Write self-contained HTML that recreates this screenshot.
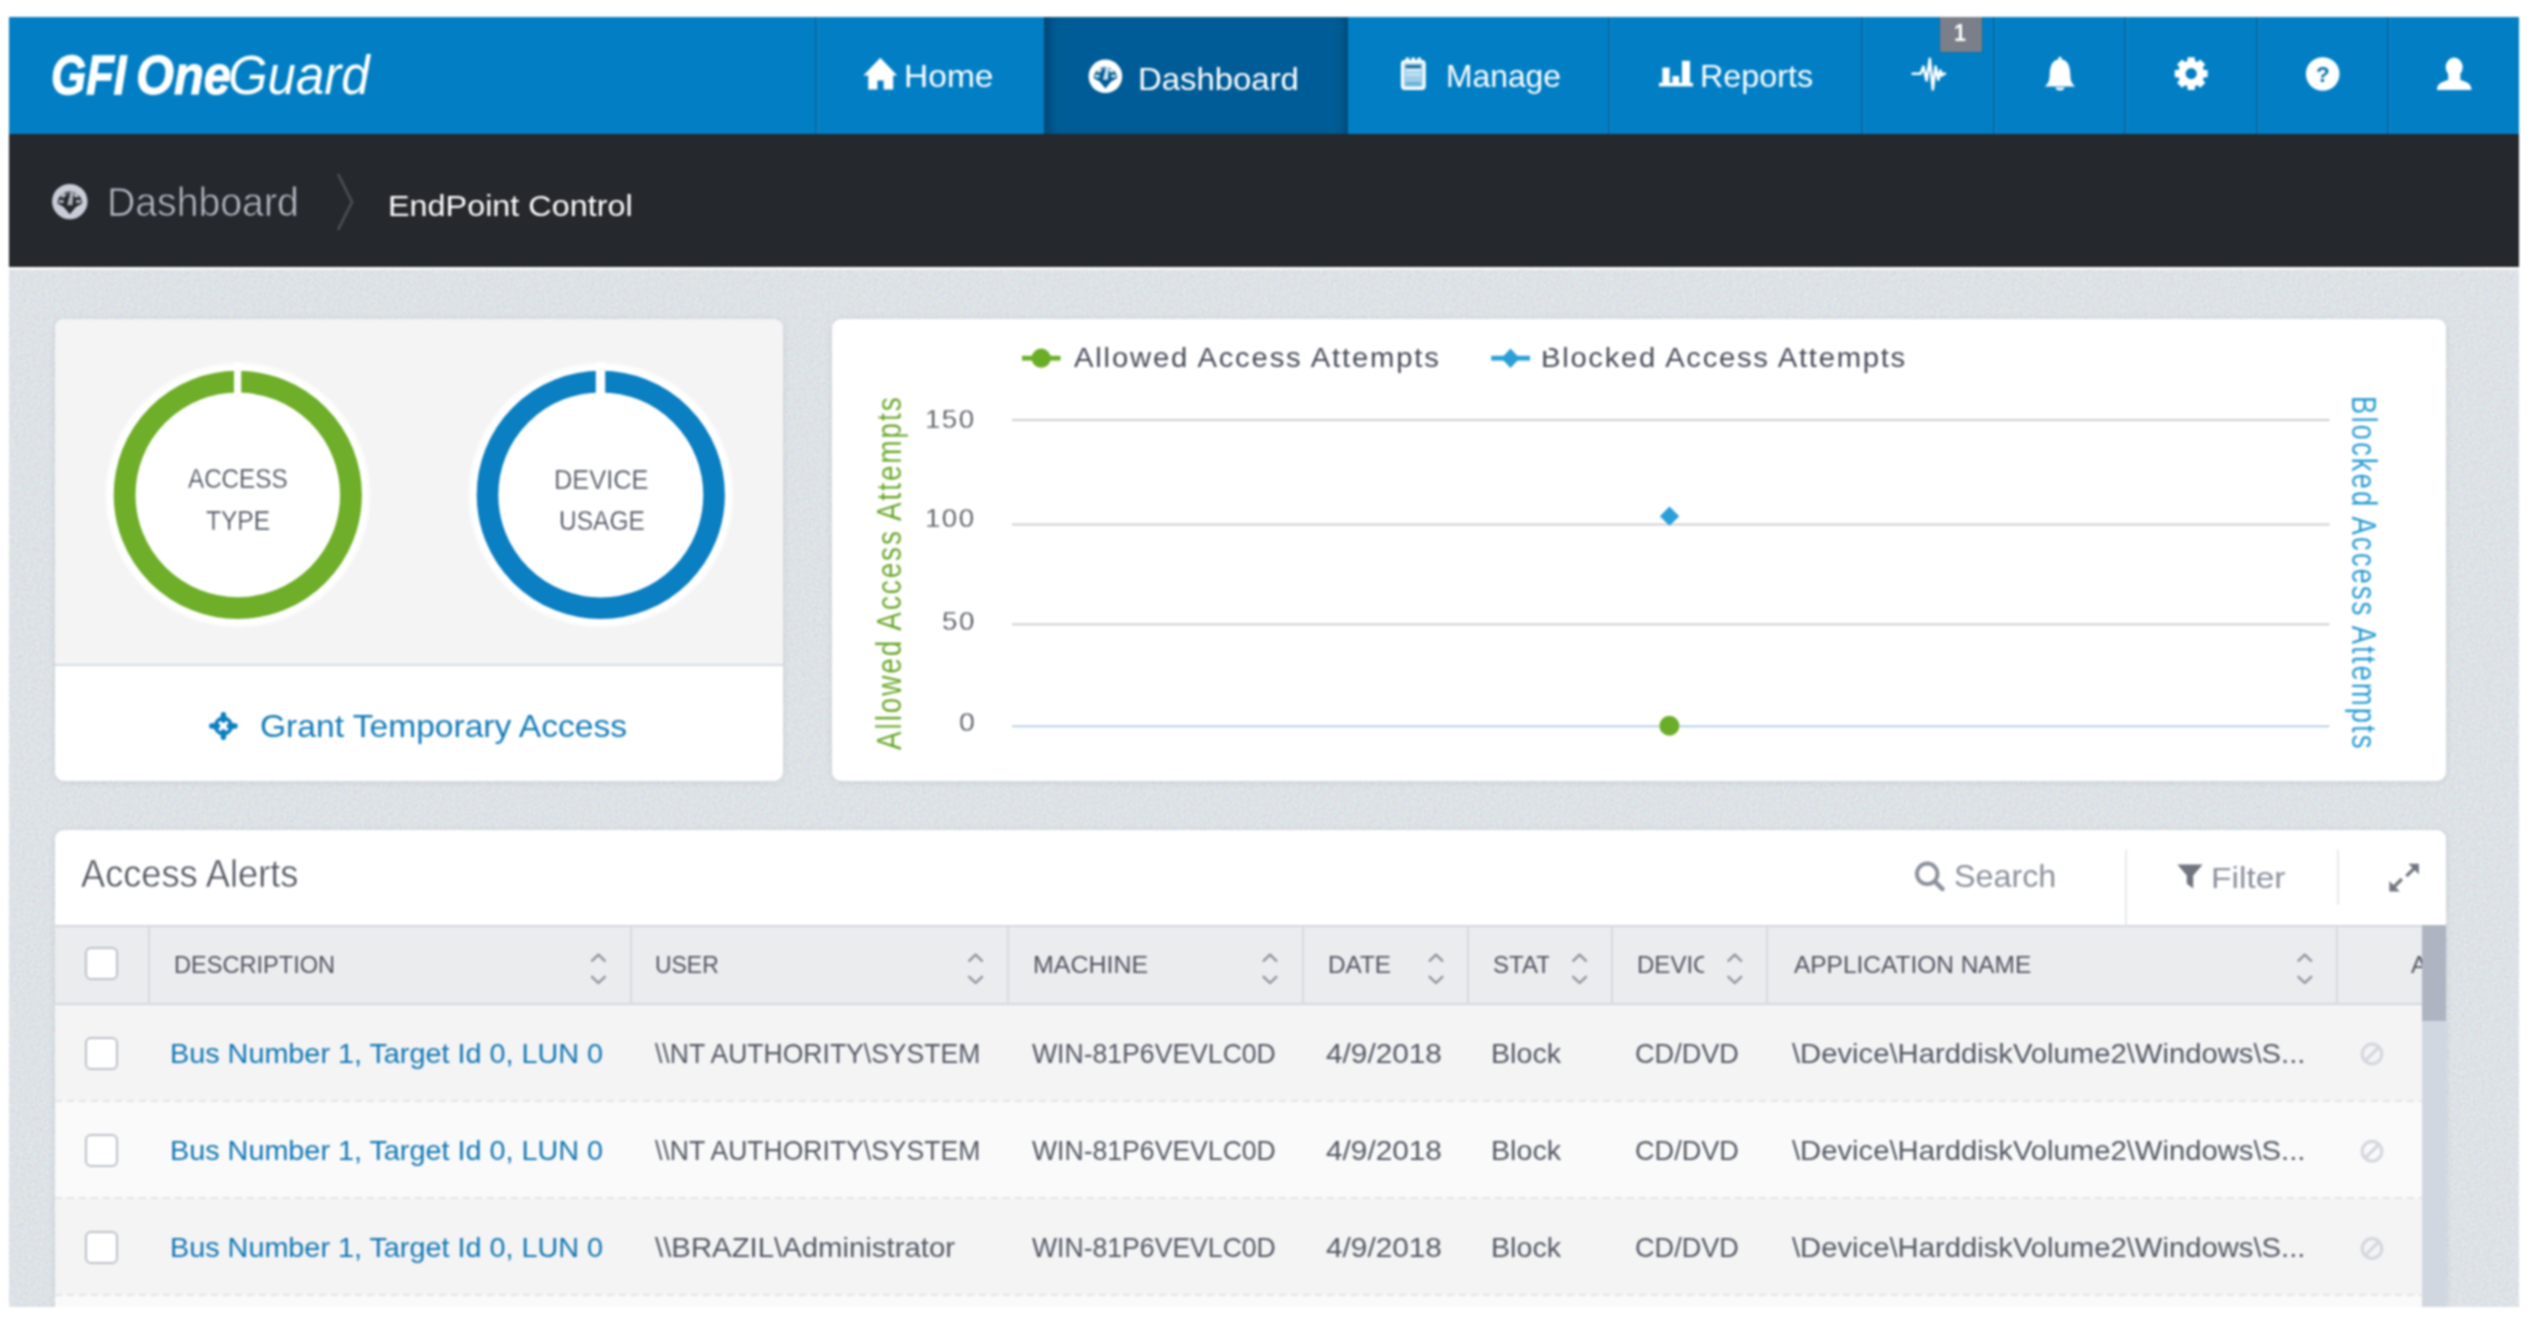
<!DOCTYPE html>
<html lang="en"><head><meta charset="utf-8"><title>GFI OneGuard - EndPoint Control</title>
<style>
html,body{margin:0;padding:0;background:#fff;}
body{width:2540px;height:1324px;position:relative;overflow:hidden;font-family:"Liberation Sans",sans-serif;}
#frame{position:absolute;left:9px;top:17px;width:2510px;height:1290px;overflow:hidden;background:#dee2e6;filter:blur(0.8px);}
#page{position:absolute;left:-9px;top:-17px;width:2540px;height:1324px;}
.a{position:absolute;}
.t{position:absolute;white-space:pre;line-height:1;transform-origin:0 0;}
.panel{position:absolute;border-radius:9px;box-shadow:0 1px 6px rgba(90,105,125,0.17);}
.sep{position:absolute;top:17px;height:117px;width:2px;background:#0569a6;border-right:1px solid #1589c9;}
.cb{position:absolute;left:85px;width:29px;height:29px;border:2px solid #bcc0c8;border-radius:6px;background:#fff;}
.cs{position:absolute;top:927px;height:77px;width:2px;background:#d6d9df;}
.row{position:absolute;left:55px;width:2367px;}
.dash{position:absolute;left:55px;width:2367px;height:2px;background:repeating-linear-gradient(90deg,#e2e4e8 0,#e2e4e8 7px,rgba(0,0,0,0) 7px,rgba(0,0,0,0) 12px);}
</style></head><body>
<div id="frame"><div id="page">

<!-- header -->
<div class="a" style="left:9px;top:17px;width:2510px;height:117px;background:#027fc4;"></div>
<div class="a" style="left:1044px;top:17px;width:304px;height:117px;background:#005c96;box-shadow:inset 12px 0 14px -10px rgba(0,0,0,.4),inset -10px 0 12px -9px rgba(0,0,0,.35);"></div>
<div class="sep" style="left:815px;"></div>
<div class="sep" style="left:1608px;"></div>
<div class="sep" style="left:1861px;"></div>
<div class="sep" style="left:1993px;"></div>
<div class="sep" style="left:2124px;"></div>
<div class="sep" style="left:2256px;"></div>
<div class="sep" style="left:2387px;"></div>
<div class="a" style="left:1940px;top:17px;width:42px;height:35px;background:#7a7f89;box-shadow:0 0 0 1px rgba(0,0,0,.12);"></div>
<!-- breadcrumb bar -->
<div class="a" style="left:9px;top:134px;width:2510px;height:133px;background:#25282c;"></div>

<svg class="a" style="left:9px;top:267px;" width="2510" height="1040"><filter id="nz" x="0" y="0" width="100%" height="100%" color-interpolation-filters="sRGB"><feTurbulence type="fractalNoise" baseFrequency="0.45" numOctaves="2" seed="7"/><feColorMatrix type="matrix" values="0.22 0 0 0 0.757  0 0.22 0 0 0.776  0 0 0.22 0 0.792  0 0 0 0 1"/></filter><rect width="2510" height="1040" filter="url(#nz)"/></svg>
<div class="a" style="left:9px;top:267px;width:2510px;height:3px;background:linear-gradient(#fff,#fff 60%,rgba(255,255,255,0));"></div>
<!-- left panel -->
<div class="panel" style="left:55px;top:319px;width:728px;height:462px;background:#fff;overflow:hidden;">
  <div class="a" style="left:0;top:0;width:728px;height:345px;background:#f4f4f5;"></div>
  <div class="a" style="left:0;top:345px;width:728px;height:2px;background:#d6dae1;"></div>
</div>
<!-- chart panel -->
<div class="panel" style="left:832px;top:319px;width:1614px;height:462px;background:#fff;"></div>
<!-- table panel -->
<div class="panel" style="left:55px;top:830px;width:2391px;height:520px;background:#fff;"></div>
<div class="a" style="left:55px;top:925px;width:2391px;height:80px;background:#ebecee;border-top:2px solid #d3d7de;border-bottom:2px solid #d3d7de;box-sizing:border-box;"></div>
<div class="row" style="top:1005px;height:96px;background:#f4f4f5;"></div>
<div class="row" style="top:1101px;height:97px;background:#fafafa;"></div>
<div class="row" style="top:1198px;height:97px;background:#f4f4f5;"></div>
<div class="row" style="top:1295px;height:30px;background:#fafafa;"></div>
<div class="dash" style="top:1100px;"></div>
<div class="dash" style="top:1197px;"></div>
<div class="dash" style="top:1294px;"></div>
<div class="cs" style="left:148px;"></div>
<div class="cs" style="left:630px;"></div>
<div class="cs" style="left:1007px;"></div>
<div class="cs" style="left:1302px;"></div>
<div class="cs" style="left:1467px;"></div>
<div class="cs" style="left:1611px;"></div>
<div class="cs" style="left:1766px;"></div>
<div class="cs" style="left:2336px;"></div>
<div class="a" style="left:2125px;top:850px;width:2px;height:76px;background:#e7e9ed;"></div>
<div class="a" style="left:2337px;top:850px;width:2px;height:55px;background:#e7e9ed;"></div>
<!-- scrollbar -->
<div class="a" style="left:2422px;top:925px;width:24px;height:400px;background:#d1d7e1;"></div>
<div class="a" style="left:2422px;top:925px;width:24px;height:96px;background:#aeb4c2;"></div>
<!-- checkboxes -->
<div class="cb" style="top:947px;"></div>
<div class="cb" style="top:1037px;"></div>
<div class="cb" style="top:1134px;"></div>
<div class="cb" style="top:1231px;"></div>

<svg class="a" style="left:0;top:0;" width="2540" height="1324" viewBox="0 0 2540 1324">
<!-- home icon -->
<path fill="#fff" d="M880.3 57.8 L897.2 75.6 L893.2 75.6 L893.2 89.6 L883.6 89.6 L883.6 80.4 L877.4 80.4 L877.4 89.6 L868.3 89.6 L868.3 75.6 L863.5 75.6 Z"/>
<!-- nav dashboard icon -->
<g>
<circle cx="1105.4" cy="76.3" r="16.8" fill="#fff"/>
<path fill="#005c96" d="M1093.81 78.20 A11.59 11.59 0 0 1 1116.99 78.20 L1111.20 81.47 L1105.40 88.42 L1099.60 81.47 Z"/>
<g fill="#fff" stroke="#fff" fill-opacity="0.80" stroke-opacity="0.80">
<path fill="none" stroke-width="2.69" d="M1094.97 76.20 L1099.60 76.20 M1111.20 76.20 L1115.83 76.20"/>
<circle stroke="none" cx="1099.37" cy="70.22" r="2.18"/>
<circle stroke="none" cx="1111.43" cy="70.22" r="2.18"/>
<path stroke="none" d="M1102.85 79.85 L1107.95 79.85 L1108.88 67.09 L1106.10 67.09 Z"/>
<path fill="none" stroke-opacity="0.30" stroke-width="3.36" d="M1097.21 72.78 A9.04 9.04 0 0 1 1113.59 72.78"/>
</g></g>
<!-- manage icon -->
<g>
<rect x="1402.4" y="61.4" width="21.8" height="27.2" rx="2.5" fill="#fff" fill-opacity=".62" stroke="#fff" stroke-width="3"/>
<rect x="1405.6" y="57.6" width="3.6" height="5" fill="#fff"/><rect x="1411.5" y="57.6" width="3.6" height="5" fill="#fff"/><rect x="1417.4" y="57.6" width="3.6" height="5" fill="#fff"/>
<rect x="1405.8" y="65.4" width="15" height="2.4" fill="#075a8e"/>
<rect x="1405.8" y="69.4" width="15" height="2" fill="#fff" fill-opacity=".7"/>
<rect x="1405.8" y="73.6" width="15" height="2" fill="#fff" fill-opacity=".5"/>
<rect x="1405.8" y="82" width="15" height="3.4" fill="#0b78b8" fill-opacity=".35"/>
</g>
<!-- reports icon -->
<g fill="#fff">
<rect x="1659" y="82.8" width="34" height="3.6"/>
<rect x="1662.4" y="67.6" width="7.2" height="16"/>
<rect x="1672.4" y="76" width="6.8" height="8"/>
<rect x="1682" y="60.8" width="8" height="23"/>
</g>
<!-- pulse icon -->
<path fill="none" stroke="#fff" stroke-width="2.6" stroke-linejoin="round" stroke-linecap="round" d="M1912.6 73.8 L1920.6 73.8 L1923.4 66.6 L1926.6 80.4 L1929.8 58.8 L1932.8 89.4 L1935.6 66.6 L1938.4 79.8 L1940.4 70.6 L1942 75.6 L1943 73.8 L1945 73.8"/>
<!-- bell -->
<path fill="#fff" d="M2044.6 86.5 C2048.6 84 2049.5 80 2049.7 75 C2049.9 66 2052.2 60.6 2058.2 59.5 L2058.2 57.8 Q2060 55.8 2061.8 57.8 L2061.8 59.5 C2067.8 60.6 2070.1 66 2070.3 75 C2070.5 80 2071.4 84 2075.4 86.5 Z M2055.6 87.6 a4.4 3 0 0 0 8.8 0 Z"/>
<!-- gear -->
<path fill="#fff" fill-rule="evenodd" stroke="#fff" stroke-width="1.6" stroke-linejoin="round" d="M2203.23 70.61 L2206.84 70.74 L2206.84 76.46 L2203.23 76.59 L2201.82 80.00 L2204.28 82.64 L2200.24 86.68 L2197.60 84.22 L2194.19 85.63 L2194.06 89.24 L2188.34 89.24 L2188.21 85.63 L2184.80 84.22 L2182.16 86.68 L2178.12 82.64 L2180.58 80.00 L2179.17 76.59 L2175.56 76.46 L2175.56 70.74 L2179.17 70.61 L2180.58 67.20 L2178.12 64.56 L2182.16 60.52 L2184.80 62.98 L2188.21 61.57 L2188.34 57.96 L2194.06 57.96 L2194.19 61.57 L2197.60 62.98 L2200.24 60.52 L2204.28 64.56 L2201.82 67.20 Z"/>
<circle cx="2191.2" cy="73.6" r="5.6" fill="#027fc4"/>
<!-- help -->
<circle cx="2322.7" cy="74" r="16.8" fill="#fff"/>
<text x="2322.9" y="82.2" text-anchor="middle" font-family="Liberation Sans, sans-serif" font-weight="bold" font-size="22.6" fill="#0a70b0">?</text>
<!-- user -->
<g fill="#fff">
<ellipse cx="2454.2" cy="67.2" rx="8.5" ry="9.6"/>
<path d="M2437 90 C2437 84.2 2440.6 82.2 2448.2 80 L2448.2 74 L2460.4 74 L2460.4 80 C2467.8 82.2 2471.4 84.2 2471.4 90 Z"/>
</g>
<!-- breadcrumb dashboard icon -->
<g>
<circle cx="69.8" cy="201.6" r="17.7" fill="#c9cdd8"/>
<path fill="#25282c" d="M57.59 203.50 A12.21 12.21 0 0 1 82.01 203.50 L75.91 207.03 L69.80 214.36 L63.69 207.03 Z"/>
<g fill="#c9cdd8" stroke="#c9cdd8" fill-opacity="0.80" stroke-opacity="0.80">
<path fill="none" stroke-width="2.83" d="M58.81 201.50 L63.69 201.50 M75.91 201.50 L80.79 201.50"/>
<circle stroke="none" cx="63.45" cy="195.18" r="2.30"/>
<circle stroke="none" cx="76.15" cy="195.18" r="2.30"/>
<path stroke="none" d="M67.11 205.32 L72.49 205.32 L73.46 191.89 L70.53 191.89 Z"/>
<path fill="none" stroke-opacity="0.30" stroke-width="3.54" d="M61.17 197.87 A9.53 9.53 0 0 1 78.43 197.87"/>
</g></g>
<!-- breadcrumb chevron -->
<path fill="none" stroke="#4b5059" stroke-width="2.6" d="M338 174 L352 202 L338 230"/>
<!-- donuts -->
<g>
<circle cx="237.8" cy="494.9" r="133" fill="#fff" fill-opacity=".55"/>
<circle cx="237.8" cy="494.9" r="130.5" fill="#fff"/>
<circle cx="237.8" cy="494.9" r="113.2" fill="none" stroke="#6fae28" stroke-width="21.8"/>
<rect x="234" y="362" width="7.2" height="60" fill="#fff"/>
<circle cx="600.8" cy="494.9" r="133" fill="#fff" fill-opacity=".55"/>
<circle cx="600.8" cy="494.9" r="130.5" fill="#fff"/>
<circle cx="600.8" cy="494.9" r="113.3" fill="none" stroke="#0a7fc2" stroke-width="21.6"/>
<rect x="595.8" y="362" width="9.4" height="60" fill="#fff"/>
</g>
<!-- crosshair icon -->
<g stroke="#0b7fc0" fill="none">
<circle cx="223.4" cy="726" r="7.9" stroke-width="3.6"/>
<path stroke-width="5.4" stroke-linecap="round" d="M223.4 714.8 L223.4 720 M223.4 732 L223.4 737.2 M211.8 726 L217.4 726 M229.4 726 L235 726"/>
</g>
<!-- chart -->
<g>
<rect x="1012" y="419" width="1317.5" height="2" fill="#cecece"/>
<rect x="1012" y="523.5" width="1317.5" height="2" fill="#cecece"/>
<rect x="1012" y="623.3" width="1317.5" height="2" fill="#cecece"/>
<rect x="1012" y="725.5" width="1317.5" height="1.6" fill="#a9c6e2"/>
<circle cx="1669.4" cy="725.8" r="10" fill="#6aae27"/>
<path fill="#2a9fd8" d="M1669.5 506.6 L1679.2 516.2 L1669.5 525.8 L1659.8 516.2 Z"/>
<rect x="1022" y="355.8" width="38.5" height="4.8" fill="#6aae27"/>
<circle cx="1041.2" cy="358.2" r="9.6" fill="#6aae27"/>
<rect x="1491.2" y="355.8" width="38.8" height="4.8" fill="#2a9fd8"/>
<path fill="#2a9fd8" d="M1510.5 348.4 L1519.6 358.2 L1510.5 368 L1501.4 358.2 Z"/>
</g>
<!-- search icon -->
<g stroke="#8b909b" fill="none">
<circle cx="1927.2" cy="873.8" r="10.3" stroke-width="3.9"/>
<path stroke-width="4.6" stroke-linecap="round" d="M1935.2 881.8 L1942.4 888.8"/>
</g>
<!-- filter icon -->
<path fill="#6f747f" d="M2177.4 864.4 L2202.6 864.4 L2193.2 875.6 L2193.2 888.4 L2186.8 883.8 L2186.8 875.6 Z"/>
<!-- expand icon -->
<g fill="#70757f" stroke="#70757f" stroke-width="3.2">
<path stroke="none" d="M2408.4 863.8 L2418.8 863.8 L2418.8 874.2 Z"/>
<path stroke="none" d="M2389.4 881 L2389.4 891.4 L2399.8 891.4 Z"/>
<path fill="none" d="M2414.2 868.4 L2406.4 876.2 M2394 886.8 L2401.8 879"/>
</g>
<path fill="none" stroke="#8d929c" stroke-width="2.3" stroke-linecap="round" stroke-linejoin="round" d="M592.0 960.8 L598.4 954.6 L604.8 960.8 M592.0 976.8 L598.4 983 L604.8 976.8"/>
<path fill="none" stroke="#8d929c" stroke-width="2.3" stroke-linecap="round" stroke-linejoin="round" d="M969.2 960.8 L975.6 954.6 L982.0 960.8 M969.2 976.8 L975.6 983 L982.0 976.8"/>
<path fill="none" stroke="#8d929c" stroke-width="2.3" stroke-linecap="round" stroke-linejoin="round" d="M1263.6 960.8 L1270.0 954.6 L1276.4 960.8 M1263.6 976.8 L1270.0 983 L1276.4 976.8"/>
<path fill="none" stroke="#8d929c" stroke-width="2.3" stroke-linecap="round" stroke-linejoin="round" d="M1429.6 960.8 L1436.0 954.6 L1442.4 960.8 M1429.6 976.8 L1436.0 983 L1442.4 976.8"/>
<path fill="none" stroke="#8d929c" stroke-width="2.3" stroke-linecap="round" stroke-linejoin="round" d="M1573.2 960.8 L1579.6 954.6 L1586.0 960.8 M1573.2 976.8 L1579.6 983 L1586.0 976.8"/>
<path fill="none" stroke="#8d929c" stroke-width="2.3" stroke-linecap="round" stroke-linejoin="round" d="M1728.4 960.8 L1734.8 954.6 L1741.2 960.8 M1728.4 976.8 L1734.8 983 L1741.2 976.8"/>
<path fill="none" stroke="#8d929c" stroke-width="2.3" stroke-linecap="round" stroke-linejoin="round" d="M2298.4 960.8 L2304.8 954.6 L2311.2 960.8 M2298.4 976.8 L2304.8 983 L2311.2 976.8"/>
<g stroke="#d4d7de" fill="none" stroke-width="3.2"><circle cx="2372" cy="1054.0" r="9.8"/><path d="M2365.2 1060.8 L2378.8 1047.2"/></g>
<g stroke="#d4d7de" fill="none" stroke-width="3.2"><circle cx="2372" cy="1151.2" r="9.8"/><path d="M2365.2 1158.0 L2378.8 1144.5"/></g>
<g stroke="#d4d7de" fill="none" stroke-width="3.2"><circle cx="2372" cy="1248.5" r="9.8"/><path d="M2365.2 1255.3 L2378.8 1241.7"/></g>
</svg>


<span class="t" style="left:50.68px;top:47.75px;font-size:55.23px;color:#fff;transform:scaleX(0.8198);font-weight:bold;font-style:italic;-webkit-text-stroke:1.3px #fff;">GFI</span>
<span class="t" style="left:136.21px;top:47.75px;font-size:55.23px;color:#fff;transform:scaleX(0.8845);font-weight:bold;font-style:italic;-webkit-text-stroke:1.0px #fff;">One</span>
<span class="t" style="left:228.11px;top:47.75px;font-size:55.23px;color:#fff;transform:scaleX(0.9223);font-style:italic;">Guard</span>
<span class="t" style="left:904.38px;top:61.05px;font-size:31.25px;color:#fff;transform:scaleX(1.0734);">Home</span>
<span class="t" style="left:1137.93px;top:62.93px;font-size:31.98px;color:#fff;transform:scaleX(1.0287);">Dashboard</span>
<span class="t" style="left:1446.26px;top:61.05px;font-size:31.25px;color:#fff;transform:scaleX(1.0186);">Manage</span>
<span class="t" style="left:1700.48px;top:61.05px;font-size:31.25px;color:#fff;transform:scaleX(1.0330);">Reports</span>
<span class="t" style="left:1953.66px;top:20.70px;font-size:23.98px;color:#fff;transform:scaleX(0.8929);font-weight:bold;">1</span>
<span class="t" style="left:107.44px;top:181.80px;font-size:40.70px;color:#b6bbc6;transform:scaleX(0.9632);-webkit-text-stroke:0.75px #25282c;">Dashboard</span>
<span class="t" style="left:387.97px;top:190.72px;font-size:30.16px;color:#fff;transform:scaleX(1.0731);">EndPoint Control</span>
<span class="t" style="left:188.00px;top:465.47px;font-size:27.33px;color:#474c5a;transform:scaleX(0.8856);-webkit-text-stroke:0.3px #fff;">ACCESS</span>
<span class="t" style="left:206.32px;top:506.87px;font-size:27.33px;color:#474c5a;transform:scaleX(0.8984);-webkit-text-stroke:0.3px #fff;">TYPE</span>
<span class="t" style="left:554.02px;top:465.87px;font-size:27.33px;color:#474c5a;transform:scaleX(0.9294);-webkit-text-stroke:0.3px #fff;">DEVICE</span>
<span class="t" style="left:558.87px;top:507.07px;font-size:27.33px;color:#474c5a;transform:scaleX(0.8986);-webkit-text-stroke:0.3px #fff;">USAGE</span>
<span class="t" style="left:259.68px;top:710.43px;font-size:31.98px;color:#137bb9;transform:scaleX(1.0505);">Grant Temporary Access</span>
<span class="t" style="left:1073.75px;top:343.62px;font-size:27.62px;color:#464b58;transform:scaleX(1.0600);letter-spacing:1.695px;">Allowed Access Attempts</span>
<span class="t" style="left:1541.46px;top:343.62px;font-size:27.62px;color:#464b58;transform:scaleX(1.0600);letter-spacing:1.595px;">Blocked Access Attempts</span>
<span class="t" style="left:925.27px;top:405.85px;font-size:26.16px;color:#4b4f56;transform:scaleX(1.0600);letter-spacing:1.370px;-webkit-text-stroke:0.3px #fff;">150</span>
<span class="t" style="left:925.27px;top:505.35px;font-size:26.16px;color:#4b4f56;transform:scaleX(1.0600);letter-spacing:1.370px;-webkit-text-stroke:0.3px #fff;">100</span>
<span class="t" style="left:942.13px;top:607.85px;font-size:26.16px;color:#4b4f56;transform:scaleX(1.0600);letter-spacing:1.378px;-webkit-text-stroke:0.3px #fff;">50</span>
<span class="t" style="left:958.61px;top:709.10px;font-size:26.16px;color:#4b4f56;transform:scaleX(1.0894);-webkit-text-stroke:0.3px #fff;">0</span>
<span class="t" style="left:81.25px;top:855.09px;font-size:38.88px;color:#4b505b;transform:scaleX(0.9316);-webkit-text-stroke:0.55px #fff;">Access Alerts</span>
<span class="t" style="left:1953.99px;top:860.43px;font-size:31.98px;color:#8b909b;transform:scaleX(1.0099);">Search</span>
<span class="t" style="left:2210.63px;top:862.61px;font-size:30.23px;color:#8b909b;transform:scaleX(1.1095);">Filter</span>
<span class="t" style="left:173.86px;top:954.24px;font-size:23.69px;color:#4f5460;transform:scaleX(0.9947);">DESCRIPTION</span>
<span class="t" style="left:655.26px;top:954.24px;font-size:23.69px;color:#4f5460;transform:scaleX(0.9681);">USER</span>
<span class="t" style="left:1033.00px;top:954.24px;font-size:23.69px;color:#4f5460;transform:scaleX(1.0532);">MACHINE</span>
<span class="t" style="left:1328.05px;top:954.24px;font-size:23.69px;color:#4f5460;transform:scaleX(1.0252);">DATE</span>
<span class="t" style="left:1793.75px;top:954.24px;font-size:23.69px;color:#4f5460;transform:scaleX(1.0320);">APPLICATION NAME</span>
<span class="t" style="left:170.25px;top:1039.82px;font-size:27.98px;color:#1276b3;transform:scaleX(1.0291);">Bus Number 1, Target Id 0, LUN 0</span>
<span class="t" style="left:655.00px;top:1039.82px;font-size:27.98px;color:#535864;transform:scaleX(0.9484);">\\NT AUTHORITY\SYSTEM</span>
<span class="t" style="left:1032.00px;top:1039.82px;font-size:27.98px;color:#535864;transform:scaleX(0.9507);">WIN-81P6VEVLC0D</span>
<span class="t" style="left:1325.78px;top:1039.82px;font-size:27.98px;color:#535864;transform:scaleX(1.0644);">4/9/2018</span>
<span class="t" style="left:1490.76px;top:1039.82px;font-size:27.98px;color:#535864;transform:scaleX(1.0237);">Block</span>
<span class="t" style="left:1634.98px;top:1039.82px;font-size:27.98px;color:#535864;transform:scaleX(0.9693);">CD/DVD</span>
<span class="t" style="left:1792.00px;top:1039.82px;font-size:27.98px;color:#535864;transform:scaleX(1.0453);">\Device\HarddiskVolume2\Windows\S...</span>
<span class="t" style="left:170.25px;top:1137.07px;font-size:27.98px;color:#1276b3;transform:scaleX(1.0291);">Bus Number 1, Target Id 0, LUN 0</span>
<span class="t" style="left:655.00px;top:1137.07px;font-size:27.98px;color:#535864;transform:scaleX(0.9484);">\\NT AUTHORITY\SYSTEM</span>
<span class="t" style="left:1032.00px;top:1137.07px;font-size:27.98px;color:#535864;transform:scaleX(0.9507);">WIN-81P6VEVLC0D</span>
<span class="t" style="left:1325.78px;top:1137.07px;font-size:27.98px;color:#535864;transform:scaleX(1.0644);">4/9/2018</span>
<span class="t" style="left:1490.76px;top:1137.07px;font-size:27.98px;color:#535864;transform:scaleX(1.0237);">Block</span>
<span class="t" style="left:1634.98px;top:1137.07px;font-size:27.98px;color:#535864;transform:scaleX(0.9693);">CD/DVD</span>
<span class="t" style="left:1792.00px;top:1137.07px;font-size:27.98px;color:#535864;transform:scaleX(1.0453);">\Device\HarddiskVolume2\Windows\S...</span>
<span class="t" style="left:170.25px;top:1234.32px;font-size:27.98px;color:#1276b3;transform:scaleX(1.0291);">Bus Number 1, Target Id 0, LUN 0</span>
<span class="t" style="left:655.00px;top:1234.32px;font-size:27.98px;color:#535864;transform:scaleX(1.0491);">\\BRAZIL\Administrator</span>
<span class="t" style="left:1032.00px;top:1234.32px;font-size:27.98px;color:#535864;transform:scaleX(0.9507);">WIN-81P6VEVLC0D</span>
<span class="t" style="left:1325.78px;top:1234.32px;font-size:27.98px;color:#535864;transform:scaleX(1.0644);">4/9/2018</span>
<span class="t" style="left:1490.76px;top:1234.32px;font-size:27.98px;color:#535864;transform:scaleX(1.0237);">Block</span>
<span class="t" style="left:1634.98px;top:1234.32px;font-size:27.98px;color:#535864;transform:scaleX(0.9693);">CD/DVD</span>
<span class="t" style="left:1792.00px;top:1234.32px;font-size:27.98px;color:#535864;transform:scaleX(1.0453);">\Device\HarddiskVolume2\Windows\S...</span>
<span class="t" style="left:872.47px;top:750.30px;font-size:34.88px;color:#62a321;transform:rotate(-90deg) scaleX(0.8000);letter-spacing:2.414px;-webkit-text-stroke:0.15px #fff;">Allowed Access Attempts</span>
<span class="t" style="left:2381.24px;top:396.26px;font-size:34.30px;color:#1f97d2;transform:rotate(90deg) scaleX(0.8000);letter-spacing:2.614px;-webkit-text-stroke:0.15px #fff;">Blocked Access Attempts</span>
<div class="a" style="left:1490.50px;top:954.24px;width:58.00px;height:28.43px;overflow:hidden;"><span class="t" style="left:2.99px;top:0;font-size:23.69px;color:#4f5460;transform:scaleX(1.0146);">STATUS</span></div>
<div class="a" style="left:1635.25px;top:954.24px;width:68.75px;height:28.43px;overflow:hidden;"><span class="t" style="left:2.07px;top:0;font-size:23.69px;color:#4f5460;transform:scaleX(1.0146);">DEVICE</span></div>
<div class="a" style="left:2407.20px;top:954.24px;width:14.80px;height:28.43px;overflow:hidden;"><span class="t" style="left:4.00px;top:0;font-size:23.69px;color:#4f5460;transform:scaleX(1.0146);">ACTION</span></div>
<div class="a" style="left:1541px;top:345px;width:8.4px;height:6.2px;background:#fff;"></div>

</div></div>
</body></html>
